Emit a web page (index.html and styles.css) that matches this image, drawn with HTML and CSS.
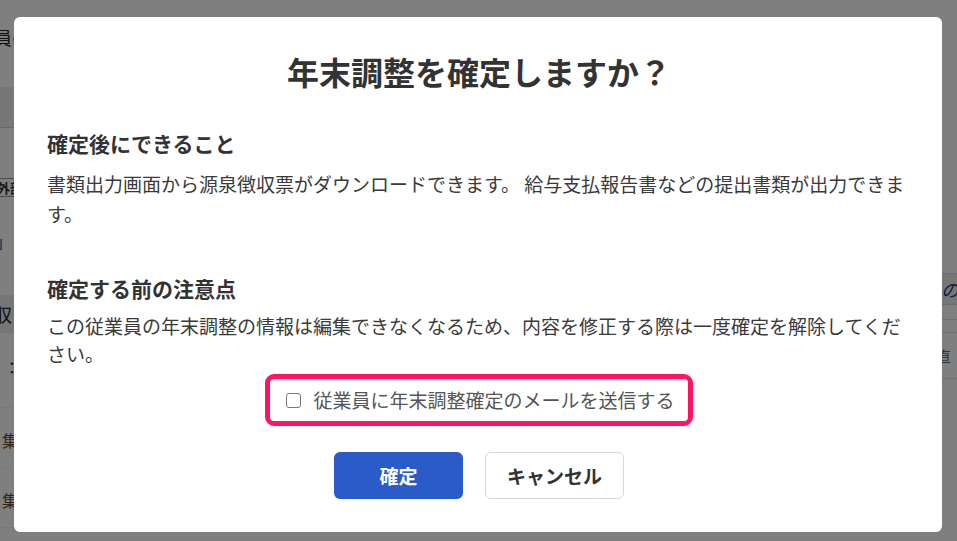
FILE: index.html
```html
<!DOCTYPE html>
<html lang="ja">
<head>
<meta charset="utf-8">
<title>年末調整を確定しますか？</title>
<link rel="stylesheet" href="styles.css">
</head>
<body>
<div class="page">
  <div class="col col-left">
    <div class="row r-head"><span class="edge-text">員の</span></div>
    <div class="row r-band"></div>
    <div class="row r-mid">
      <span class="tag">外部</span>
      <span class="link">」</span>
    </div>
    <div class="row r-band2"><span class="edge-text">収</span></div>
    <div class="row r-item"><span class="edge-dot">：</span></div>
    <div class="row r-item2"><span class="edge-ico">集</span></div>
    <div class="row r-item2"><span class="edge-ico">集</span></div>
  </div>
  <div class="col col-right">
    <div class="row r-rtop"></div>
    <div class="row r-rband"><span class="r-link">の</span></div>
    <div class="row r-rline"></div>
    <div class="row r-rline2"></div>
    <div class="row r-rtext"><span class="r-gray">直</span></div>
  </div>
</div>

<div class="overlay">
  <div class="modal">
    <h1 class="modal-title">年末調整を確定しますか？</h1>
    <section class="section">
      <h2 class="section-title">確定後にできること</h2>
      <p class="section-text text-1">書類出力画面から源泉徴収票がダウンロードできます。 給与支払報告書などの提出書類が出力できます。</p>
    </section>
    <section class="section section-2">
      <h2 class="section-title">確定する前の注意点</h2>
      <p class="section-text text-2">この従業員の年末調整の情報は編集できなくなるため、内容を修正する際は一度確定を解除してください。</p>
    </section>
    <div class="check-wrap">
      <label class="check-box">
        <span class="checkbox"></span>
        <span class="check-label">従業員に年末調整確定のメールを送信する</span>
      </label>
    </div>
    <div class="actions">
      <button class="btn btn-primary">確定</button>
      <button class="btn btn-secondary">キャンセル</button>
    </div>
  </div>
</div>
</body>
</html>
```

FILE: styles.css
```css
* { box-sizing: border-box; }
html, body { margin: 0; padding: 0; }
body {
  width: 957px;
  height: 541px;
  overflow: hidden;
  font-family: "Noto Sans CJK JP", "Noto Sans", sans-serif;
  color: #333;
  background: #fff;
  position: relative;
}

/* background page */
.page {
  display: flex;
  width: 957px;
  height: 541px;
}
.col { flex: 1; display: flex; flex-direction: column; }
.row { display: flex; }
.r-head { height: 87px; padding-top: 24px; }
.edge-text {
  font-size: 18px;
  line-height: 26px;
  margin-left: -6px;
  color: #222;
}
.r-band { height: 41px; background: #efefef; border-bottom: 1px solid #d0d0d0; }
.r-mid {
  height: 167px;
  flex-direction: column;
  align-items: flex-start;
  padding-top: 50px;
}
.tag {
  font-size: 13px;
  line-height: 17px;
  font-weight: 700;
  border: 1px solid #999;
  padding: 0 2px;
  margin-left: -6px;
  color: #333;
}
.link {
  margin-top: 34px;
  margin-left: -4px;
  font-size: 16px;
  line-height: 20px;
  color: #1a4fb0;
}
.r-band2 { height: 38px; background: #ececec; align-items: center; }
.r-item { height: 75px; border-bottom: 1px solid #f2f2f2; padding-top: 24px; }
.edge-dot { font-size: 16px; line-height: 20px; margin-left: 4px; color: #222; }
.r-item2 { height: 60px; border-bottom: 1px solid #f2f2f2; padding-top: 22px; }
.edge-ico { font-size: 16px; line-height: 20px; margin-left: 2px; color: #6a4a20; }

.col-right { align-items: stretch; }
.r-rtop { height: 273px; }
.r-rband {
  height: 32px;
  background: #ececec;
  border-top: 1px solid #d8d8d8;
  border-bottom: 1px solid #d8d8d8;
  justify-content: flex-end;
  align-items: center;
}
.r-link { font-size: 18px; font-style: italic; color: #1a3f8a; margin-right: -2px; }
.r-rline { height: 15px; border-bottom: 1px solid #e2e2e2; }
.r-rline2 { height: 13px; border-bottom: 1px solid #e2e2e2; }
.r-rtext {
  height: 46px;
  border-bottom: 1px solid #e2e2e2;
  justify-content: flex-end;
  align-items: center;
}
.r-gray { font-size: 15px; color: #666; margin-right: 6px; }

/* overlay + modal */
.overlay {
  position: absolute;
  inset: 0;
  background: rgba(0, 0, 0, 0.5);
  display: flex;
  justify-content: center;
  align-items: flex-start;
  padding-top: 17px;
}
.modal {
  width: 928px;
  height: 515px;
  margin-left: -1px;
  background: #fff;
  border-radius: 6px;
  padding: 32px 31px 0 33px;
  display: flex;
  flex-direction: column;
}
.modal-title {
  margin: 0;
  text-align: center;
  font-size: 32px;
  line-height: 44px;
  font-weight: 700;
  color: #333;
}
.section { margin-top: 35px; }
.section-2 { margin-top: 44px; }
.section-title {
  margin: 0;
  font-size: 21px;
  line-height: 30px;
  font-weight: 700;
  color: #333;
}
.section-text {
  margin: 11px 0 0;
  width: 866px;
  font-size: 19px;
  color: #3a3a3a;
}
.text-1 { line-height: 30px; }
.text-2 { line-height: 28px; margin-top: 9px; }
.check-wrap {
  display: flex;
  justify-content: center;
  margin-top: 6px;
}
.check-box {
  display: inline-flex;
  align-items: center;
  height: 52px;
  border: 5px solid #ff1464;
  border-radius: 9px;
  padding: 0 13px 0 16px;
  gap: 12px;
}
.checkbox {
  width: 15px;
  height: 15px;
  border: 1.5px solid #777;
  border-radius: 3px;
  background: #fff;
}
.check-label {
  font-size: 19px;
  line-height: 26px;
  color: #555;
}
.actions {
  display: flex;
  justify-content: center;
  gap: 22px;
  margin-top: 26px;
}
.btn {
  height: 47px;
  border-radius: 6px;
  font-family: "Noto Sans CJK JP", "Noto Sans", sans-serif;
  font-size: 19px;
  font-weight: 700;
  cursor: pointer;
}
.btn-primary {
  width: 129px;
  background: #2a5bc8;
  border: none;
  color: #fff;
}
.btn-secondary {
  width: 139px;
  background: #fff;
  border: 1px solid #d8d8d8;
  color: #333;
}
```
